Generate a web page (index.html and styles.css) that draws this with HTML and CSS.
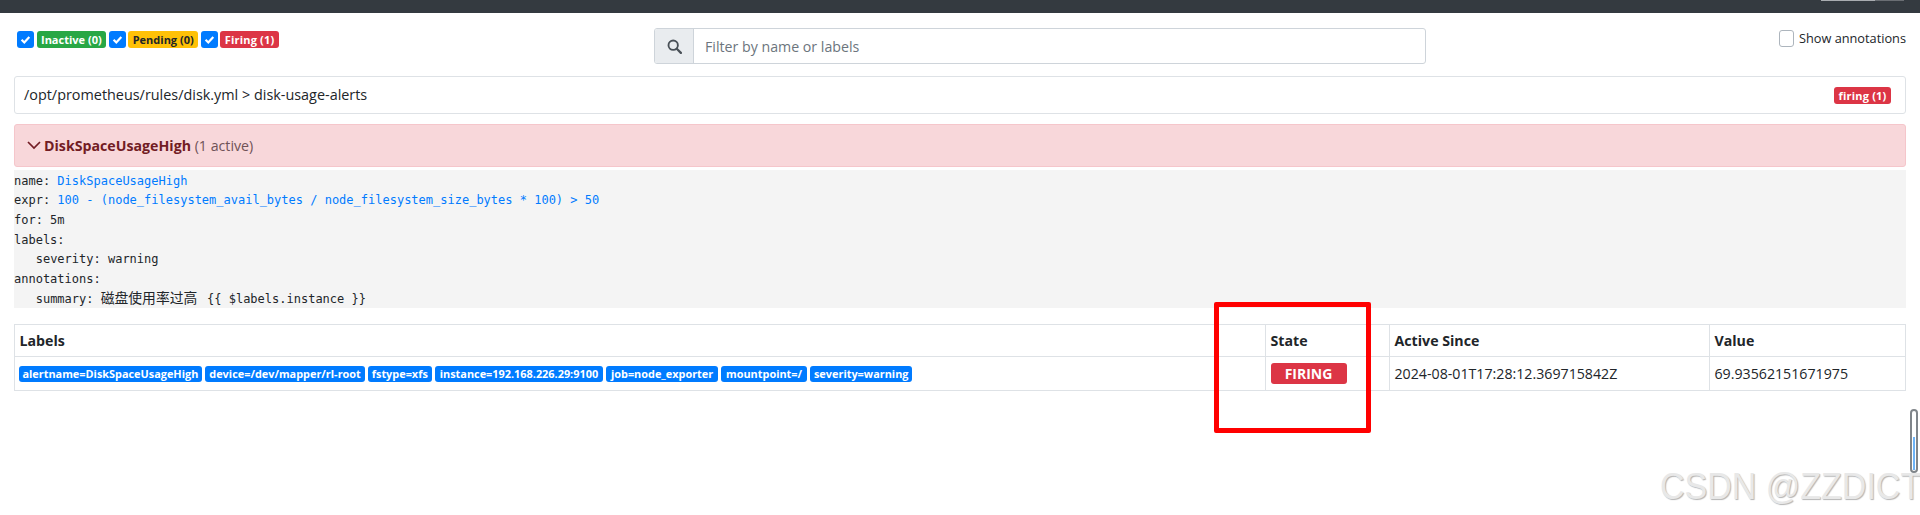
FILE: index.html
```html
<!DOCTYPE html>
<html lang="en">
<head>
<meta charset="utf-8">
<title>Alerts</title>
<link rel="stylesheet" href="styles.css">
</head>
<body>
<nav class="navbar"><span class="nav-sliver"></span></nav>
<main class="container">
  <div class="toolbar">
    <div class="filters">
      <span class="check"><svg viewBox="0 0 17 17"><path d="M4.6 8.8l2.7 2.7 5-5.6" fill="none" stroke="#fff" stroke-width="2.2"/></svg></span>
      <span class="badge badge-green">Inactive (0)</span>
      <span class="check"><svg viewBox="0 0 17 17"><path d="M4.6 8.8l2.7 2.7 5-5.6" fill="none" stroke="#fff" stroke-width="2.2"/></svg></span>
      <span class="badge badge-yellow">Pending (0)</span>
      <span class="check"><svg viewBox="0 0 17 17"><path d="M4.6 8.8l2.7 2.7 5-5.6" fill="none" stroke="#fff" stroke-width="2.2"/></svg></span>
      <span class="badge badge-red">Firing (1)</span>
    </div>
    <div class="search">
      <span class="search-addon"><svg viewBox="0 0 16 16" class="search-icon"><circle cx="6.6" cy="6.6" r="5" fill="none" stroke="#495057" stroke-width="2"/><path d="M10.4 10.4l4.4 4.4" stroke="#495057" stroke-width="2.4" stroke-linecap="round"/></svg></span>
      <span class="search-input">Filter by name or labels</span>
    </div>
    <label class="annotations"><span class="empty-check"></span><span>Show annotations</span></label>
  </div>

  <div class="group-header">
    <span class="group-title">/opt/prometheus/rules/disk.yml &gt; disk-usage-alerts</span>
    <span class="badge badge-red">firing (1)</span>
  </div>

  <div class="alert">
    <svg class="chevron" viewBox="0 0 14 9"><path d="M1 1l6 6 6-6" fill="none" stroke="#721c24" stroke-width="1.7"/></svg>
    <strong>DiskSpaceUsageHigh</strong><span class="active-count">&nbsp;(1 active)</span>
  </div>

  <div class="rule">
    <div class="line">name: <a class="blue">DiskSpaceUsageHigh</a></div>
    <div class="line">expr: <a class="blue">100 - (node_filesystem_avail_bytes / node_filesystem_size_bytes * 100) &gt; 50</a></div>
    <div class="line">for: 5m</div>
    <div class="line">labels:</div>
    <div class="line indent">severity: warning</div>
    <div class="line">annotations:</div>
    <div class="line indent">summary: <span class="cjk">磁盘使用率过高</span> {{ $labels.instance }}</div>
  </div>

  <table class="alerts">
    <colgroup>
      <col class="col-labels"><col class="col-state"><col class="col-since"><col>
    </colgroup>
    <thead>
      <tr><th>Labels</th><th>State</th><th>Active Since</th><th>Value</th></tr>
    </thead>
    <tbody>
      <tr>
        <td class="labels">
          <span class="label">alertname=DiskSpaceUsageHigh</span>
          <span class="label">device=/dev/mapper/rl-root</span>
          <span class="label">fstype=xfs</span>
          <span class="label label-wide">instance=192.168.226.29:9100</span>
          <span class="label label-wide">job=node_exporter</span>
          <span class="label label-wide">mountpoint=/</span>
          <span class="label">severity=warning</span>
        </td>
        <td><span class="state">FIRING</span></td>
        <td>2024-08-01T17:28:12.369715842Z</td>
        <td>69.93562151671975</td>
      </tr>
    </tbody>
  </table>
</main>
<div class="highlight"></div>
<div class="scroll-mark"><span class="scroll-fill"></span></div>
<div class="watermark">CSDN @ZZDICT</div>
</body>
</html>
```
FILE: styles.css
```css
* { box-sizing: border-box; }
html, body { height: 100%; }
body {
  margin: 0;
  background: #fff;
  color: #212529;
  font-family: "Open Sans", "Noto Sans", "Noto Sans CJK SC", sans-serif;
  font-size: 14.2px;
  overflow: hidden;
  position: relative;
}
.navbar {
  height: 13px;
  background: #343a40;
  display: flex;
  justify-content: flex-end;
  padding-right: 16px;
}
.nav-sliver {
  width: 83px;
  height: 1px;
  background: linear-gradient(90deg, #a9acb0 0 65%, #6a6e73 65%);
}
.container { padding: 0 14px; }

.toolbar {
  display: grid;
  grid-template-columns: 640px 772px 1fr;
  height: 63px;
  padding-top: 15px;
}
.filters {
  display: flex;
  align-items: flex-start;
  padding: 3px 0 0 3px;
  gap: 2.5px;
}
.check {
  width: 17px;
  height: 17px;
  border-radius: 3px;
  background: #007bff;
  display: block;
}
.check svg { display: block; width: 17px; height: 17px; }
.badge {
  display: inline-block;
  height: 17px;
  line-height: 17px;
  padding: 0 4.5px;
  border-radius: 3px;
  font-size: 11px;
  font-weight: 700;
  color: #fff;
  white-space: nowrap;
}
.badge-green { background: #28a745; }
.badge-yellow { background: #ffc107; color: #212529; }
.badge-red { background: #dc3545; letter-spacing: .2px; }

.search {
  display: flex;
  height: 36px;
  border: 1px solid #ced4da;
  border-radius: 3px;
  overflow: hidden;
}
.search-addon {
  width: 39px;
  background: #e9ecef;
  border-right: 1px solid #ced4da;
  display: flex;
  align-items: center;
  justify-content: center;
}
.search-icon { width: 15px; height: 15px; }
.search-input {
  flex: 1;
  padding: 1px 0 0 11px;
  line-height: 34px;
  color: #6c757d;
}
.annotations {
  display: flex;
  justify-content: flex-end;
  align-items: flex-start;
  gap: 4.5px;
  padding-top: 2px;
  line-height: 17px;
  color: #212529;
  font-size: 12.75px;
}
.empty-check {
  width: 15px;
  height: 17px;
  border: 1px solid #adb5bd;
  border-radius: 3px;
}

.group-header {
  height: 38px;
  border: 1px solid #dee2e6;
  border-radius: 3px;
  padding: 0 14px 0 9px;
  display: flex;
  justify-content: space-between;
  align-items: center;
  margin-bottom: 10px;
}
.group-title { font-size: 14.4px; padding-bottom: 1px; }
.alert {
  height: 43px;
  background: #f8d7da;
  border: 1px solid #f5c6cb;
  border-radius: 3px;
  color: #721c24;
  padding-left: 12px;
  display: flex;
  align-items: center;
}
.chevron { width: 14px; height: 9px; margin-right: 3px; }
.active-count { color: #6f5257; }

.rule {
  margin: 3px 0 16px;
  padding-top: 1.5px;
  background: #f4f4f4;
  height: 138px;
  font-family: "DejaVu Sans Mono", "Noto Sans CJK SC", monospace;
  font-size: 12px;
  line-height: 19.7px;
  color: #212529;
}
.line { white-space: pre; height: 19.7px; }
.indent { padding-left: 21.7px; }
.blue { color: #007bff; }
.cjk {
  display: inline-block;
  font-size: 13.8px;
  line-height: 1;
  margin-right: 2.5px;
}

.alerts {
  width: 100%;
  table-layout: fixed;
  border-collapse: collapse;
}
.col-labels { width: 1251px; }
.col-state { width: 124px; }
.col-since { width: 320px; }
.alerts th, .alerts td {
  border: 1px solid #dee2e6;
  padding: 0 4.5px;
  text-align: left;
  vertical-align: middle;
}
.alerts th { height: 32px; font-weight: 700; }
.alerts td { height: 34px; }
.alerts .labels { font-size: 0; padding-left: 3.5px; }
.label {
  display: inline-block;
  height: 16px;
  line-height: 16px;
  padding: 0 3.9px;
  margin-right: 3.2px;
  border-radius: 3px;
  background: #007bff;
  color: #fff;
  font-size: 10.9px;
  font-weight: 700;
  white-space: nowrap;
}
.label-wide { padding: 0 4.8px; }
.state {
  display: block;
  width: 76px;
  height: 21px;
  line-height: 21px;
  border-radius: 3px;
  background: #dc3545;
  color: #fff;
  font-size: 14px;
  font-weight: 700;
  text-align: center;
}

.highlight {
  position: absolute;
  left: 1214px;
  top: 302px;
  width: 157px;
  height: 131px;
  border: 5px solid #ff0000;
  border-radius: 2px;
}
.scroll-mark {
  position: absolute;
  left: 1910px;
  top: 409px;
  width: 8px;
  height: 64px;
  border: 2px solid #80858a;
  border-radius: 4px;
  background: #fff;
}
.scroll-fill {
  position: absolute;
  left: 1px;
  right: 1px;
  top: 26px;
  bottom: 1px;
  background: #6db3f7;
}
.watermark {
  position: absolute;
  left: 1660px;
  top: 467px;
  font-family: "Liberation Sans", sans-serif;
  font-size: 34px;
  line-height: 39px;
  white-space: nowrap;
  color: #e8e8e8;
  text-shadow: 1px 1px 1px #b4b4b4;
  transform: scaleY(1.08);
}
```
